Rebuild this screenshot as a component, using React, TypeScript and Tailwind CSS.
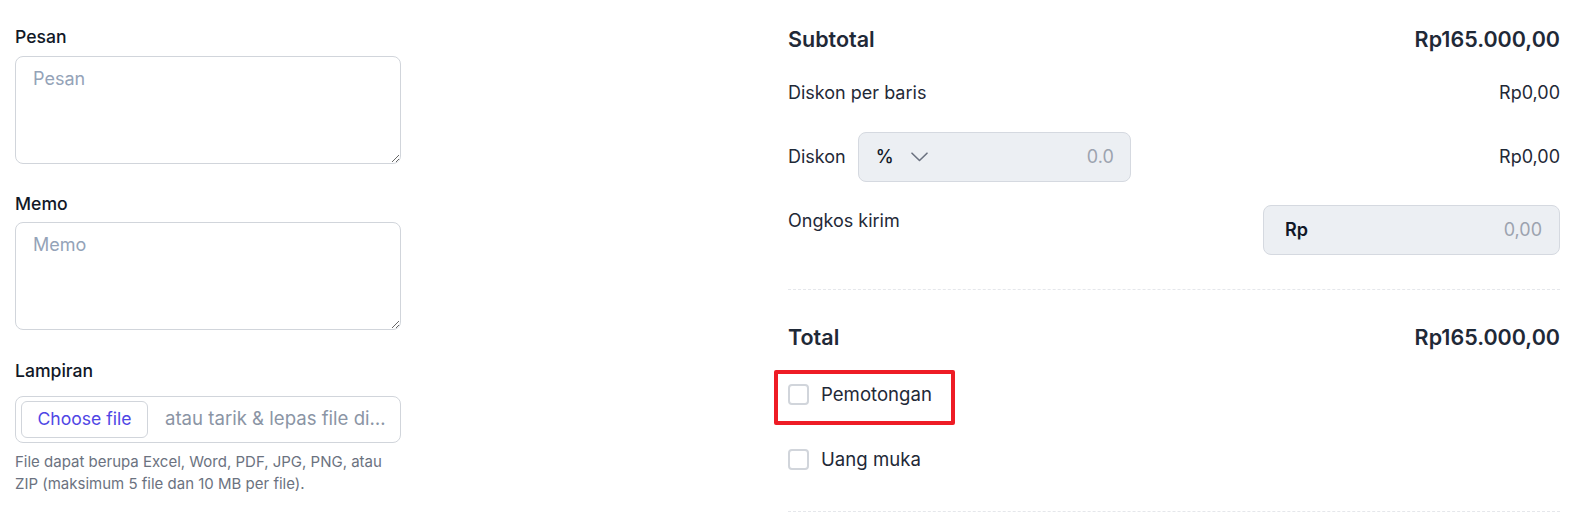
function Field({ label, placeholder, className = "" }: { label: string; placeholder: string; className?: string }) {
  return (
    <div className={className}>
      <label className="block text-[17.6px] leading-6 font-medium text-[#111827]">{label}</label>
      <textarea
        placeholder={placeholder}
        className="mt-[6.5px] block h-[108px] w-full rounded-[8px] border border-[#d1d5db] bg-white px-[17px] py-[10px] text-[18px] leading-6 text-[#111827] outline-none placeholder:text-[#94a3b8]"
      />
    </div>
  );
}

function Check({ label }: { label: string }) {
  return (
    <div className="flex items-center gap-3 h-[26px]">
      <span className="block size-[21px] rounded-[4px] border-2 border-[#d1d5db] bg-white" />
      <span className="text-[18.6px] leading-[26px] text-[#1f2937]">{label}</span>
    </div>
  );
}

export default function App() {
  return (
    <div className="flex min-h-[517px] bg-white pt-[25px] font-['Inter','Noto_Sans',sans-serif] text-[#1f2937]">
      {/* left: notes & attachments */}
      <div className="ml-[15px] w-[386px] shrink-0">
        <Field label="Pesan" placeholder="Pesan" />
        <Field label="Memo" placeholder="Memo" className="mt-[28px]" />

        <div className="mt-[28.5px]">
          <label className="block text-[17.6px] leading-6 font-medium text-[#111827]">Lampiran</label>
          <div className="mt-[13px] flex h-[47px] items-center rounded-[8px] border border-[#d1d5db] pl-[5px]">
            <button className="h-[37px] w-[127px] shrink-0 rounded-[6px] border border-[#d1d5db] bg-white text-[17.6px] text-[#4f46e5]">
              Choose file
            </button>
            <span className="ml-[17px] truncate pr-[14px] text-[18.6px] text-[#8b95a5]">atau tarik &amp; lepas file disini</span>
          </div>
          <p className="mt-[8px] text-[15px] leading-[22px] text-[#6b7280]">
            File dapat berupa Excel, Word, PDF, JPG, PNG, atau ZIP (maksimum 5 file dan 10 MB per file).
          </p>
        </div>
      </div>

      {/* right: totals */}
      <div className="ml-auto mr-[26px] w-[772px] shrink-0">
        <div className="flex h-[28px] items-center justify-between text-[21.5px] font-semibold text-[#1f2937]">
          <span>Subtotal</span>
          <span>Rp165.000,00</span>
        </div>

        <div className="mt-[26px] flex h-[26px] items-center justify-between text-[18px]">
          <span>Diskon per baris</span>
          <span>Rp0,00</span>
        </div>

        <div className="mt-[26.5px] flex items-center justify-between text-[18px]">
          <div className="flex items-center gap-3">
            <span>Diskon</span>
            <div className="flex h-[50px] w-[273px] items-center rounded-[8px] border border-[#d5d9e0] bg-[#eceff3] pl-[17px] pr-[16px]">
              <span className="font-medium text-[#111827]">%</span>
              <svg width="17" height="10" viewBox="0 0 17 10" fill="none" className="ml-[17px] text-[#6b7280]">
                <path d="M1 1.2l7.5 7.3 7.5-7.3" stroke="currentColor" strokeWidth="1.6" strokeLinecap="round" strokeLinejoin="round" />
              </svg>
              <span className="ml-auto text-[#9ca3af]">0.0</span>
            </div>
          </div>
          <span>Rp0,00</span>
        </div>

        <div className="mt-[23px] flex items-start justify-between text-[18px]">
          <span className="pt-[3px] leading-[26px]">Ongkos kirim</span>
          <div className="flex h-[50px] w-[297px] items-center rounded-[8px] border border-[#d5d9e0] bg-[#eceff3] pl-[21px] pr-[17px]">
            <span className="font-semibold text-[#111827]">Rp</span>
            <span className="ml-auto text-[#9ca3af]">0,00</span>
          </div>
        </div>

        <div className="mt-[34px] border-t border-dashed border-[#e5e7eb]" />

        <div className="mt-[34px] flex h-[28px] items-center justify-between text-[21.5px] font-semibold text-[#1f2937]">
          <span>Total</span>
          <span>Rp165.000,00</span>
        </div>

        <div className="relative mt-[29.5px]">
          <Check label="Pemotongan" />
          <div className="pointer-events-none absolute left-[-14px] top-[-11.5px] h-[55px] w-[181px] rounded-[2px] border-4 border-[#ee1c25]" />
        </div>

        <div className="mt-[39px]">
          <Check label="Uang muka" />
        </div>

        <div className="mt-[38.5px] border-t border-dashed border-[#e5e7eb]" />
      </div>
    </div>
  );
}
